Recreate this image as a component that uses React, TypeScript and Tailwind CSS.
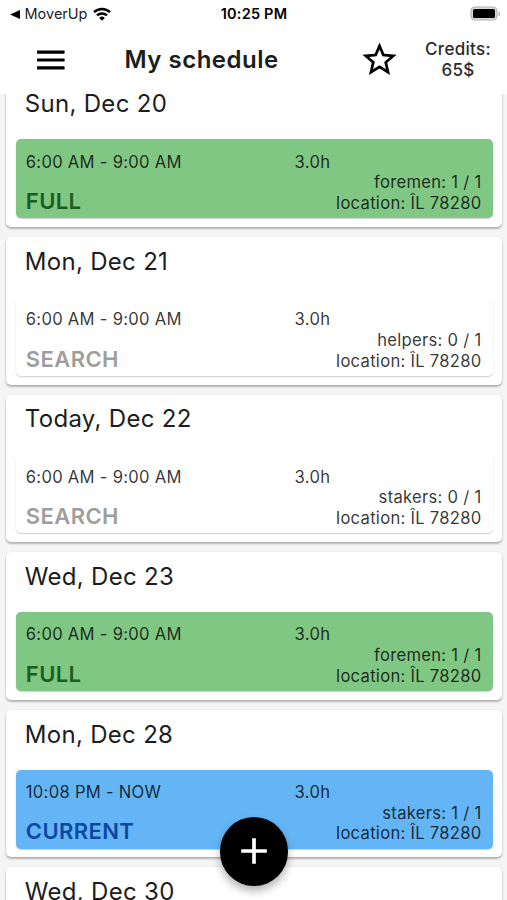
import type { ReactNode } from "react";
import { MdStarBorder, MdAdd } from "react-icons/md";

type Shift = {
  day: string;
  time: string;
  status: "FULL" | "SEARCH" | "CURRENT";
  crew: string;
};

const shifts: Shift[] = [
  { day: "Sun, Dec 20", time: "6:00 AM - 9:00 AM", status: "FULL", crew: "foremen: 1 / 1" },
  { day: "Mon, Dec 21", time: "6:00 AM - 9:00 AM", status: "SEARCH", crew: "helpers: 0 / 1" },
  { day: "Today, Dec 22", time: "6:00 AM - 9:00 AM", status: "SEARCH", crew: "stakers: 0 / 1" },
  { day: "Wed, Dec 23", time: "6:00 AM - 9:00 AM", status: "FULL", crew: "foremen: 1 / 1" },
  { day: "Mon, Dec 28", time: "10:08 PM - NOW", status: "CURRENT", crew: "stakers: 1 / 1" },
];

const slotColors = {
  FULL: "bg-[#81c784]",
  SEARCH: "bg-white",
  CURRENT: "bg-[#64b5f6]",
};

const statusColors = {
  FULL: "text-[#1b5e20]",
  SEARCH: "text-[#9e9e9e]",
  CURRENT: "text-[#0d47a1]",
};

function StatusBar() {
  return (
    <div className="grid h-7 grid-cols-3 items-center text-black">
      <div className="flex items-center pl-[10px]">
        <svg width="10" height="9" viewBox="0 0 10 9">
          <path d="M0 4.5 10 0v9z" />
        </svg>
        <span className="ml-[4.5px] text-[14.5px] leading-none text-[#222]">MoverUp</span>
        <svg className="ml-[5.5px]" width="18" height="14" viewBox="0 0 18 14" fill="none" stroke="#000" strokeWidth="2.5">
          <path d="M1 5.2a11.5 11.5 0 0 1 16 0" />
          <path d="M4 8.4a7.2 7.2 0 0 1 10 0" />
          <path d="M9 13.8 6.2 10.9a4 4 0 0 1 5.6 0z" fill="#000" stroke="none" />
        </svg>
      </div>
      <div className="pl-px text-center text-[14.5px] leading-none font-semibold tracking-[0.2px]">10:25 PM</div>
      <div className="flex justify-end pr-[6px]">
        <svg width="31" height="16" viewBox="0 0 31 16">
          <rect x="1" y="1" width="26" height="13" rx="4" fill="#d8d8d8" stroke="#b4b4b4" strokeWidth="1.2" />
          <rect x="3" y="3" width="22" height="9" rx="1.5" />
          <path d="M28.5 5.3c2 .8 2 4.2 0 5z" fill="#aaa" />
        </svg>
      </div>
    </div>
  );
}

function CardShell({ day, children }: { day: string; children?: ReactNode }) {
  return (
    <div className="h-[147.6px] shrink-0 rounded-[5px] bg-white pr-[9.5px] pl-[9.5px] shadow-[0_2px_2px_rgba(0,0,0,0.2),0_1px_3px_rgba(0,0,0,0.14)]">
      <h2 className="h-[59.8px] pt-[9.8px] pl-[9.3px] text-[24px] leading-[30px] tracking-[0.3px] text-[#1d1d1d]">{day}</h2>
      {children}
    </div>
  );
}

function ShiftCard({ shift }: { shift: Shift }) {
  return (
    <CardShell day={shift.day}>
      <div
        className={`flex h-[79px] flex-col rounded-[5px] pr-[11px] pl-[10.3px] pt-[12.4px] text-[16.6px] leading-[20.7px] tracking-[0.28px] text-black/80 shadow-[0_1px_1.5px_rgba(0,0,0,0.2)] ${slotColors[shift.status]}`}
      >
        <div className="flex">
          <span className="w-[268.7px]">{shift.time}</span>
          <span className="tracking-[0.35px]">3.0h</span>
        </div>
        <div className="flex items-end justify-between">
          <span className={`pb-[0.8px] text-[22px] leading-[23px] font-semibold tracking-[0.4px] ${statusColors[shift.status]}`}>{shift.status}</span>
          <div className="text-right">
            <p>{shift.crew}</p>
            <p>location: ÎL 78280</p>
          </div>
        </div>
      </div>
    </CardShell>
  );
}

export default function App() {
  return (
    <div className="relative flex h-[900px] w-[507px] flex-col overflow-hidden bg-[#f5f5f5] font-['Inter','Liberation_Sans',sans-serif]">
      <header className="z-10 h-[94px] shrink-0 bg-white">
        <StatusBar />
        <div className="flex h-[63px] items-center">
          <svg className="ml-[36.5px]" width="28" height="20" viewBox="0 0 28 20" stroke="#000" strokeWidth="3.2">
            <path d="M0 2.1h27.6M0 10h27.6M0 17.9h27.6" />
          </svg>
          <h1 className="ml-[60px] w-[234px] text-[24px] font-semibold tracking-[0.5px] text-[#1d1d1d]">My schedule</h1>
          <MdStarBorder className="size-[41px] text-black" />
          <div className="ml-[19.5px] w-[78px] pt-[1.5px] text-center text-[17px] leading-[21.5px] font-medium tracking-[0.3px] text-[#2b2b2b]">
            <p>Credits:</p>
            <p>65$</p>
          </div>
        </div>
      </header>

      {/* list is scrolled a little under the app bar */}
      <main className="-mt-[14.6px] flex flex-col gap-[10px] pr-[5px] pl-[6px]">
        {shifts.map((shift) => (
          <ShiftCard key={shift.day} shift={shift} />
        ))}
        <CardShell day="Wed, Dec 30" />
      </main>

      <button className="absolute top-[817px] left-[219.5px] z-20 flex size-[68.5px] items-center justify-center rounded-full bg-black text-white shadow-[0_5px_9px_rgba(0,0,0,0.3)]">
        <MdAdd className="size-[44px]" />
      </button>
    </div>
  );
}
